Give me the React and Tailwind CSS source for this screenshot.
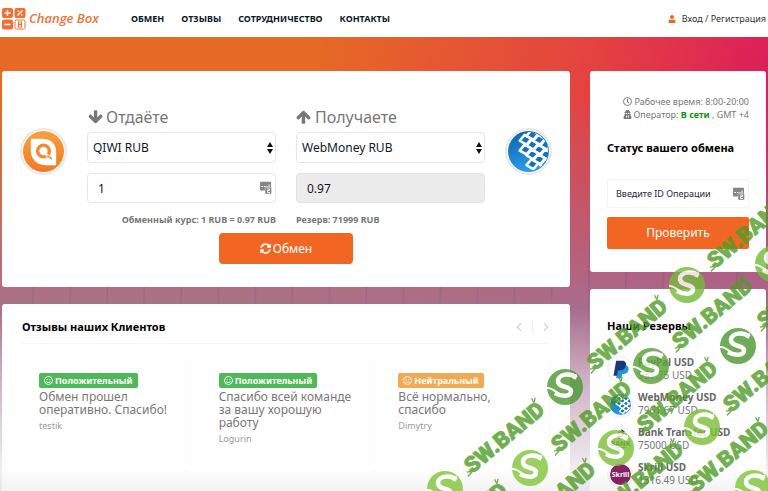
import React, { useState } from "react";
import { FaRegClock, FaUserSecret, FaUser, FaSyncAlt, FaRegSmile, FaRegMeh } from "react-icons/fa";
import { ChevronLeft, ChevronRight } from "lucide-react";

const NAV = ["Обмен", "Отзывы", "Сотрудничество", "Контакты"];

const REVIEWS = [
  { good: true, text: "Обмен прошел\nоперативно. Спасибо!", author: "testik" },
  { good: true, text: "Спасибо всей команде\nза вашу хорошую\nработу", author: "Logurin" },
  { good: false, text: "Всё нормально,\nспасибо", author: "Dimytry" },
];

// stamp positions, circles first and then the diagonal labels
const DOTS = [
  [687, 285, "#76bb38"], [773, 264, "#76bb38"], [565, 387, "#4f9a35"], [651, 366, "#5ba337"],
  [738, 346, "#4f9a35"], [445, 489, "#84c63c"], [530, 468, "#84c63c"], [616, 448, "#7fbf3a"],
  [702, 427, "#7fbf3a"], [753, 488, "#84c63c"],
];
const LABELS = [
  [627, 334], [712, 313], [747, 232], [797, 292], [504, 437], [591, 416],
  [677, 396], [763, 376], [467, 518], [555, 497], [643, 477], [728, 456],
];

// tiles of the WebMoney globe
const TILES = [
  [18, 9], [25, 4], [25, 14], [32, 9], [18, 19], [32, 19], [39, 14], [25, 24],
  [39, 24], [32, 29], [25, 34], [39, 34],
];

function Logo() {
  return (
    <svg viewBox="0 0 24 22" className="h-[22px] w-6" fill="none" stroke="#fff" strokeWidth="1.4">
      <rect x="0" y="0" width="11" height="10" rx="2" fill="#f07030" stroke="none" />
      <rect x="12.500" y="0" width="11" height="10" rx="2" fill="#f07030" stroke="none" />
      <rect x="0" y="11.500" width="11" height="10" rx="2" fill="#f07030" stroke="none" />
      <rect x="13" y="12" width="10" height="9" rx="1.500" stroke="#f07030" strokeWidth="1" />
      <path d="M5.500 2v6M2.500 5h6M2.500 16.500h6M15.500 7.500l5-5" />
      <path d="M15.500 3.200h1.500M19 6.800h1.500" />
      <rect x="16.500" y="14" width="3" height="5" stroke="#f07030" strokeWidth="1" />
      <path d="M16.500 16.500h3" stroke="#f07030" strokeWidth="1" />
    </svg>
  );
}

function ThickArrow({ className }) {
  return (
    <svg viewBox="0 0 1792 1792" className={`h-4 w-4 ${className}`} fill="currentColor">
      <path d="M1611 971q0 51-37 90l-75 75q-38 38-91 38-54 0-90-38l-294-293v704q0 52-37.500 84.500t-90.500 32.500h-128q-53 0-90.500-32.500t-37.500-84.500v-704l-294 293q-36 38-90 38t-90-38l-75-75q-38-38-38-90 0-53 38-91l651-651q35-37 90-37 54 0 91 37l651 651q37 39 37 91z" />
    </svg>
  );
}

function Qiwi() {
  return (
    <svg viewBox="0 0 42 42" className="h-full w-full">
      <defs>
        <linearGradient id="qiwi" x1="0" y1="0" x2="0" y2="1">
          <stop offset="0" stopColor="#f9a03a" />
          <stop offset="1" stopColor="#f07a26" />
        </linearGradient>
      </defs>
      <circle cx="21" cy="21" r="21" fill="url(#qiwi)" />
      <path d="M8 8h12c8 0 14 5 14 14v13H23C14 35 8 29 8 20z" fill="#fff" />
      <circle cx="21" cy="20.500" r="6" fill="none" stroke="#f58a2c" strokeWidth="3.500" />
      <path d="M21 22l4 1 2 3 3 3-6-2z" fill="#fff" />
      <path d="M23 25l3 2 4 3-1-3-3-2z" fill="#f58a2c" />
    </svg>
  );
}

function WebMoney() {
  return (
    <svg viewBox="0 0 42 42" className="h-full w-full">
      <defs>
        <linearGradient id="wm" x1="0" y1="0" x2="0.300" y2="1">
          <stop offset="0" stopColor="#0a60ad" />
          <stop offset="1" stopColor="#2a9ce6" />
        </linearGradient>
        <clipPath id="wmclip"><circle cx="21" cy="21" r="20" /></clipPath>
      </defs>
      <circle cx="21" cy="21" r="21" fill="url(#wm)" />
      <g clipPath="url(#wmclip)" fill="#1470bd" stroke="#fff" strokeWidth="2.600" strokeLinejoin="round">
        {TILES.map(([x, y]) => (
          <path key={`${x}-${y}`} d={`M${x - 6} ${y + 1}l5-6 7 4-5 6z`} />
        ))}
      </g>
    </svg>
  );
}

function PayPal() {
  return (
    <svg viewBox="0 0 24 24" className="h-full w-full">
      <path d="M9 7h9c4 1 4 5 2 8-2 2-4 2-6 2l-1 5H7z" fill="#1f9ad6" />
      <path d="M7 2h7c4 0 5 3 4 6-1 4-4 5-7 5H9l-1 6H4z" fill="#1d3579" />
    </svg>
  );
}

function Bank() {
  return (
    <svg viewBox="0 0 24 24" className="h-full w-full overflow-visible">
      <path d="M9 7a4 4 0 0 1 5-4M15 5a4 4 0 0 1-5 4" fill="none" stroke="#222" strokeWidth="1.500" />
      <path d="M13 0l4 3-4 2zM11 7l-4 2 4 3z" fill="#222" />
      <text x="12" y="19" textAnchor="middle" fontSize="8" fontWeight="700" fill="#222">BANK</text>
      <path d="M6 21h12M8 23h8" stroke="#555" strokeWidth="1" />
    </svg>
  );
}

function Skrill() {
  return (
    <svg viewBox="0 0 24 24" className="h-full w-full">
      <circle cx="12" cy="12" r="12" fill="#862165" />
      <text x="12" y="15" textAnchor="middle" fontSize="8" fontWeight="700" fill="#fff">Skrill</text>
    </svg>
  );
}

const RESERVES = [
  { name: "PayPal USD", amount: "931.75 USD", Icon: PayPal },
  { name: "WebMoney USD", amount: "7961.67 USD", Icon: WebMoney },
  { name: "Bank Transfer USD", amount: "75000 USD", Icon: Bank },
  { name: "Skrill USD", amount: "1316.49 USD", Icon: Skrill },
];

// password manager badge that sits inside text boxes
function FieldBadge() {
  return (
    <svg viewBox="0 0 12 13" className="pointer-events-none absolute top-1/2 right-1 h-[13px] w-3 -translate-y-1/2">
      <rect x="0" y="0" width="11" height="9" rx="1" fill="#858585" />
      <path d="M1.500 5h1.500M4 5h1.500M6.500 5h1M9 3v2.500" stroke="#fff" strokeWidth="1" />
      <rect x="5" y="6" width="6.500" height="6.500" rx="1" fill="#858585" stroke="#fff" strokeWidth="0.400" />
      <path d="M7 7.500h2.500v1.500H7.500V11H10" fill="none" stroke="#fff" strokeWidth="0.900" />
    </svg>
  );
}

function CoinRing({ children }) {
  return (
    <div className="mt-[22px] h-[47px] w-[47px] rounded-full border-2 border-[#e8e8e8] bg-white p-px">
      {children}
    </div>
  );
}

function CurrencySelect({ id, value }) {
  return (
    <div className="relative">
      <select id={id} defaultValue={value} className="h-[31px] w-full appearance-none rounded border border-[#e6e6e6] bg-white px-[5px] text-[12px] text-gray-900">
        <option>{value}</option>
      </select>
      <svg viewBox="0 0 6 12" className="pointer-events-none absolute top-[10px] right-[3px] h-3 w-1.5" fill="#111">
        <path d="M3 0l3 5H0zM3 12l3-5H0z" />
      </svg>
    </div>
  );
}

function Stamps() {
  return (
    <svg className="pointer-events-none absolute inset-0 h-full w-full" aria-hidden="true">
      {DOTS.map(([x, y, color]) => (
        <g key={`${x}-${y}`} transform={`translate(${x} ${y})`} opacity="0.82">
          <circle r="18" fill={color} />
          <path d="M11-9C6-15-7-13-7-6c0 7 13 5 13 10 0 6-9 6-16 2" fill="none" stroke="#fff" strokeWidth="4.500" />
          <path d="M-18 1c5-1 8 4 14 7" fill="none" stroke="#fff" strokeWidth="2" />
          <path d="M7-12l5-1-1 6z" fill="#fff" />
        </g>
      ))}
      {LABELS.map(([x, y]) => (
        <g key={`${x}-${y}`} transform={`translate(${x} ${y}) rotate(-40)`} opacity="0.8">
          <text
            y="8"
            textAnchor="middle"
            fontFamily="Roboto, sans-serif"
            fontWeight="900"
            fontSize="22"
            fill="#4f9c26"
            stroke="#4f9c26"
            strokeWidth="0.800"
          >
            SW.BAND
          </text>
          <path d="M-46 6l-7 1M-46 6l-5-3M45-7l4-3M45-7l1-5" fill="none" stroke="#4f9c26" strokeWidth="1.400" />
        </g>
      ))}
    </svg>
  );
}

export default function App() {
  const [amount, setAmount] = useState("1");

  return (
    <div className="relative flex h-screen flex-col overflow-hidden bg-white font-['Noto_Sans','Open_Sans',sans-serif] text-gray-900">
      <header className="flex h-[37px] shrink-0 items-center bg-white px-0.5">
        <a href="#home" className="flex w-[129px] items-center gap-[3px] font-['Open_Sans','Noto_Sans',sans-serif] text-[13px] font-semibold text-[#ee7438] italic">
          <Logo />
          Change Box
        </a>
        <nav className="flex flex-1 gap-[17px] text-[9px] font-bold uppercase">
          {NAV.map((item) => (
            <a key={item} href="#nav">{item}</a>
          ))}
        </nav>
        <a href="#login" className="flex items-center gap-1.5 text-[9px] text-[#333]">
          <FaUser size={8} className="text-[#f26522]" />
          Вход / Регистрация
        </a>
      </header>

      <div className="flex-1 bg-[linear-gradient(to_bottom,transparent_12%,rgba(163,114,146,0.920)_56%,rgba(205,180,200,0.960)_70%,#f3f1f4_90%),repeating-linear-gradient(92deg,transparent_0_34px,rgba(40,0,60,0.600)_35px,transparent_37px),linear-gradient(105deg,#e66a24_0%,#e66a24_35%,#e4453f_65%,#dc1c5c_88%)] bg-[size:100%_100%,100%_60%,100%_100%] bg-[position:0_0,0_100%,0_0] bg-no-repeat px-0.5 pt-[34px]">
        <div className="grid grid-cols-[minmax(0,1fr)_176px] items-start gap-5">
          <main className="flex flex-col gap-[17px]">
            <form className="grid grid-cols-[47px_1fr_1fr_47px] gap-x-5 rounded-[3px] bg-white px-[18px] pt-[35px] pb-[23px]">
              <CoinRing><Qiwi /></CoinRing>
              <div className="flex flex-col">
                <label htmlFor="give" className="mb-1 flex h-[22px] items-center gap-[3px] text-[16px] text-[#777]">
                  <ThickArrow className="rotate-180" /> Отдаёте
                </label>
                <CurrencySelect id="give" value="QIWI RUB" />
                <div className="relative mt-2.5">
                  <input
                    aria-label="Сумма"
                    value={amount}
                    onChange={(e) => setAmount(e.target.value)}
                    className="h-[30px] w-full rounded border border-[#e6e6e6] px-2.5 text-[12px]"
                  />
                  <FieldBadge />
                </div>
                <p className="mt-2.5 text-right text-[9px] leading-[14px] font-bold whitespace-nowrap text-[#777]">Обменный курс: 1 RUB = 0.97 RUB</p>
              </div>
              <div className="flex flex-col">
                <label htmlFor="get" className="mb-1 flex h-[22px] items-center gap-[3px] text-[16px] text-[#777]">
                  <ThickArrow className="" /> Получаете
                </label>
                <CurrencySelect id="get" value="WebMoney RUB" />
                <input
                  aria-label="К получению"
                  readOnly
                  value="0.97"
                  className="mt-2.5 h-[30px] w-full rounded border border-[#e2e2e2] bg-[#ececec] px-2.5 text-[12px]"
                />
                <p className="mt-2.5 text-[9px] leading-[14px] font-bold text-[#777]">Резерв: 71999 RUB</p>
              </div>
              <CoinRing><WebMoney /></CoinRing>
              <button type="button" className="col-span-4 mt-1.5 flex h-[31px] w-[134px] items-center justify-center gap-0.5 justify-self-center rounded bg-[#f26522] text-[12px] text-white">
                <FaSyncAlt size={11} /> Обмен
              </button>
            </form>

            <section className="min-h-[220px] rounded-[3px] bg-white px-5 pt-3.5">
              <div className="flex items-center border-b border-[#f7f7f7] pb-[7px]">
                <h2 className="flex-1 text-[11px] leading-[18px] font-bold text-black">
                  Отзывы наших <span>Клиентов</span>
                </h2>
                <button type="button" aria-label="Назад" className="border-r border-[#f4f4f4] pr-1.5 text-gray-300"><ChevronLeft size={14} /></button>
                <button type="button" aria-label="Вперёд" className="-mr-[3px] pl-1.5 text-gray-300"><ChevronRight size={14} /></button>
              </div>
              <div className="mt-[13px] grid grid-cols-3 gap-[11px]">
                {REVIEWS.map((r) => (
                  <article key={r.author} className="min-h-[110px] border-r border-gray-50 pt-4 pl-[17px]">
                    <span className={`flex h-[15px] w-fit items-center gap-0.5 rounded-[2px] px-[5px] text-[9px] font-bold text-white ${r.good ? "bg-[#4fb858]" : "bg-[#f0ab52]"}`}>
                      {r.good ? <FaRegSmile size={9} /> : <FaRegMeh size={9} />}
                      {r.good ? "Положительный" : "Нейтральный"}
                    </span>
                    <p className="mt-0.5 text-[12px] leading-[13px] whitespace-pre-line text-[#777]">{r.text}</p>
                    <p className="mt-[3px] text-[9px] leading-[13px] text-[#999]">{r.author}</p>
                  </article>
                ))}
              </div>
            </section>
          </main>

          <aside className="flex flex-col gap-[17px]">
            <section className="rounded-[3px] bg-white px-[17px] pt-6 pb-[23px]">
              <div className="text-right text-[9px] leading-[13px] whitespace-nowrap text-[#777]">
                <p className="flex items-center justify-end gap-0.5"><FaRegClock size={9} /> Рабочее время: 8:00-20:00</p>
                <p className="flex items-center justify-end gap-0.5">
                  <FaUserSecret size={9} />
                  <span>Оператор: <b className="text-[#0a930a]">В сети</b> , GMT +4</span>
                </p>
              </div>
              <h2 className="mt-[18px] text-[11px] leading-[18px] font-bold whitespace-nowrap text-black">Статус вашего обмена</h2>
              <div className="relative mt-[22px]">
                <input aria-label="ID операции" placeholder="Введите ID Операции" className="h-[29px] w-full rounded-[2px] border border-gray-100 px-2 text-[9px] placeholder:text-gray-800" />
                <FieldBadge />
              </div>
              <button type="button" className="mt-[9px] h-8 w-full rounded-[2px] bg-[#f26522] text-[12px] text-white">Проверить</button>
            </section>

            <section className="rounded-[3px] bg-white px-[17px] pt-7 pb-6">
              <h2 className="text-[11px] leading-[18px] font-bold text-black">Наши Резервы</h2>
              <ul className="mt-[21px] flex flex-col gap-[9px]">
                {RESERVES.map(({ name, amount: left, Icon }) => (
                  <li key={name} className="flex h-[26px] items-center gap-1 text-[10px] leading-[13px] whitespace-nowrap text-[#777]">
                    <span className="h-[27px] w-[27px] shrink-0 rounded-full border-2 border-gray-100 bg-white p-px"><Icon /></span>
                    <span>
                      <b className="block text-[#666]">{name}</b>
                      {left}
                    </span>
                  </li>
                ))}
              </ul>
            </section>
          </aside>
        </div>
      </div>
      <div className="pointer-events-none absolute inset-x-0 bottom-0 h-6 bg-linear-to-b from-transparent to-black/5" />
      <Stamps />
    </div>
  );
}
